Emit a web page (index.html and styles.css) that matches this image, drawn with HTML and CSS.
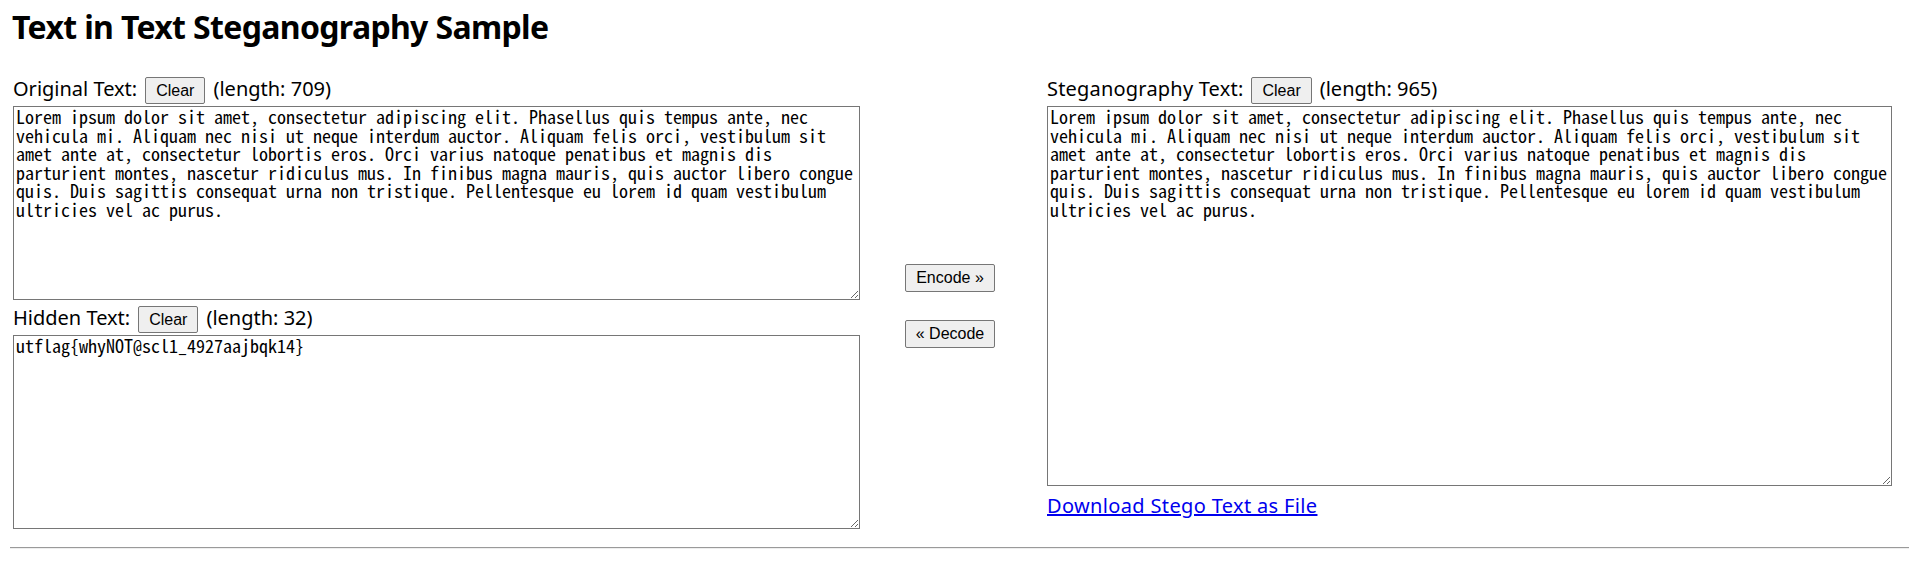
FILE: index.html
```html
<!DOCTYPE html>
<html lang="en">
<head>
    <meta charset="UTF-8">
    <meta name="viewport" content="width=device-width, initial-scale=1.0">
    <title>Text in Text Steganography Sample</title>
    <link rel="stylesheet" href="styles.css">
</head>
<body>
    <h1 class="title">Text in Text Steganography Sample</h1>

    <div class="panes">
        <div class="pane pane-left">
            <div class="field-head">
                <span>Original Text:</span>
                <button class="btn" id="clear-original">Clear</button>
                <span>(length: <span id="original-length">709</span>)</span>
            </div>
            <textarea id="original-text" class="text-box">Lorem ipsum dolor sit amet, consectetur adipiscing elit. Phasellus quis tempus ante, nec vehicula mi. Aliquam nec nisi ut neque interdum auctor. Aliquam felis orci, vestibulum sit amet ante at, consectetur lobortis eros. Orci varius natoque penatibus et magnis dis parturient montes, nascetur ridiculus mus. In finibus magna mauris, quis auctor libero congue quis. Duis sagittis consequat urna non tristique. Pellentesque eu lorem id quam vestibulum ultricies vel ac purus.</textarea>

            <div class="field-head field-head-next">
                <span>Hidden Text:</span>
                <button class="btn" id="clear-hidden">Clear</button>
                <span>(length: <span id="hidden-length">32</span>)</span>
            </div>
            <textarea id="hidden-text" class="text-box">utflag{whyNOT@scl1_4927aajbqk14}</textarea>
        </div>

        <div class="pane-actions">
            <button class="btn btn-action" id="encode-button">Encode &raquo;</button>
            <button class="btn btn-action" id="decode-button">&laquo; Decode</button>
        </div>

        <div class="pane pane-right">
            <div class="field-head">
                <span class="label-wide">Steganography Text:</span>
                <button class="btn" id="clear-stego">Clear</button>
                <span>(length: <span id="stego-length">965</span>)</span>
            </div>
            <textarea id="stego-text" class="text-box text-box-tall">Lorem ipsum dolor sit amet, consectetur adipiscing elit. Phasellus quis tempus ante, nec vehicula mi. Aliquam nec nisi ut neque interdum auctor. Aliquam felis orci, vestibulum sit amet ante at, consectetur lobortis eros. Orci varius natoque penatibus et magnis dis parturient montes, nascetur ridiculus mus. In finibus magna mauris, quis auctor libero congue quis. Duis sagittis consequat urna non tristique. Pellentesque eu lorem id quam vestibulum ultricies vel ac purus.</textarea>
            <a href="#" class="download" id="download-link">Download Stego Text as File</a>
        </div>
    </div>

    <hr class="divider">
</body>
</html>
```

FILE: styles.css
```css
html {
    overflow-y: scroll;
}
body {
    margin: 0 8px;
    font-family: "Noto Sans", sans-serif;
    font-size: 20px;
    color: #000;
}
.title {
    margin: 5px 0 0 4px;
    font-size: 32px;
    line-height: 44px;
    font-weight: bold;
    letter-spacing: -0.65px;
}
.panes {
    display: flex;
    margin: 26px 0 0 5px;
}
.pane-left {
    width: 847px;
}
.pane-right {
    width: 845px;
    margin-left: 7px;
}
.field-head {
    display: flex;
    align-items: baseline;
    gap: 8px;
    height: 31px;
    white-space: nowrap;
}
.field-head-next {
    margin-top: 4px;
}
.label-wide {
    letter-spacing: 0.2px;
}
.text-box {
    display: block;
    box-sizing: border-box;
    width: 847px;
    height: 194px;
    margin: 0;
    padding: 0 2px 2px;
    border: 1px solid #767676;
    font-family: "Noto Sans Mono CJK SC", monospace;
    font-size: 18px;
    line-height: 18.6px;
    color: #000;
}
.text-box-tall {
    width: 845px;
    height: 380px;
}
.pane-actions {
    width: 180px;
    display: flex;
    flex-direction: column;
    align-items: center;
    justify-content: center;
    gap: 28px;
    padding-top: 7px;
}
.btn {
    font-family: "Liberation Sans", Arial, sans-serif;
    font-size: 16px;
    line-height: 17px;
    padding: 4px 10px;
    color: #000;
    background: #efefef;
    border: 1px solid #767676;
    border-radius: 2px;
}
.btn-action {
    line-height: 18px;
}
.download {
    display: inline-block;
    margin-top: 6px;
    color: #0000ee;
    letter-spacing: 0.35px;
}
.divider {
    height: 0;
    margin: 18px 3px 0 2px;
    border: 0;
    border-top: 1px solid #9a9a9a;
    border-bottom: 1px solid #eeeeee;
}
```
